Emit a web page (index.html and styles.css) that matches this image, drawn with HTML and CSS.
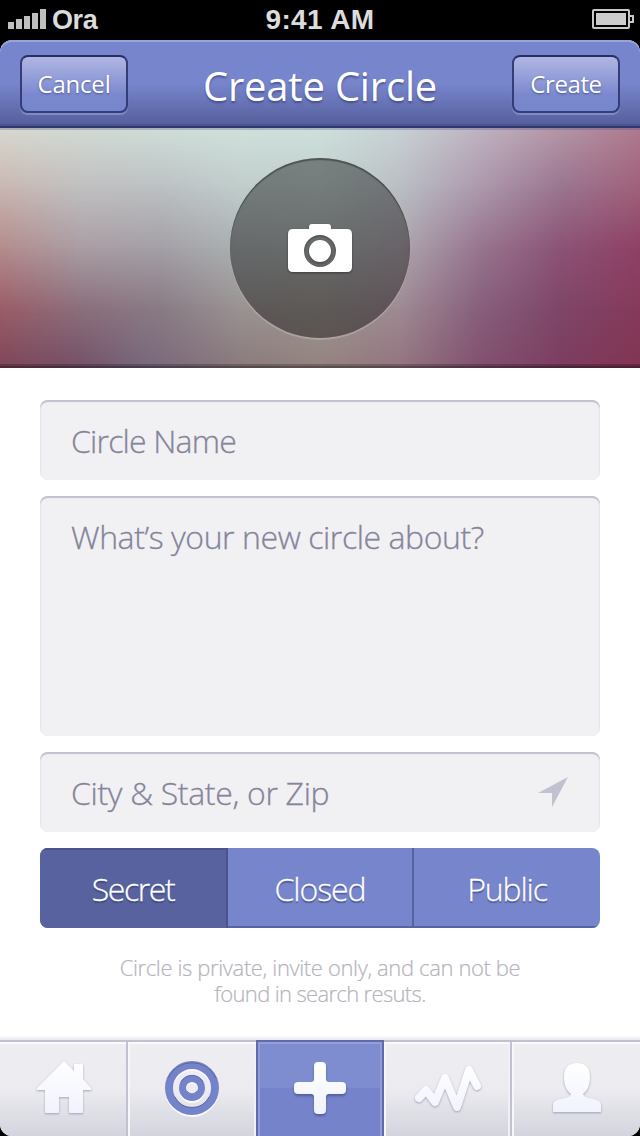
FILE: index.html
```html
<!DOCTYPE html>
<html lang="en">
<head>
<meta charset="utf-8">
<title>Create Circle</title>
<link rel="stylesheet" href="styles.css">
</head>
<body>
<div class="phone">
  <header class="status">
    <div class="carrier">
      <svg width="38" height="20" viewBox="0 0 38 20" fill="#bfbfbf"><path d="M0 13h6v7H0zM8 10h6v10H8zM16 7h6v13h-6zM24 4h6v16h-6zM32 0h6v20h-6z"/></svg>
      <span class="carrier-name">Ora</span>
    </div>
    <span class="clock">9:41 AM</span>
    <svg class="battery" width="42" height="20" viewBox="0 0 42 20"><rect x="1" y="1" width="36" height="18" rx="1" fill="none" stroke="#c8c8c8" stroke-width="2"/><path d="M4 4h30v12H4z" fill="#ccc"/><path d="M38 7h3v6h-3" fill="none" stroke="#c8c8c8" stroke-width="2"/></svg>
  </header>

  <div class="screen">
    <nav class="navbar">
      <button class="nav-button"><span class="cancel-label">Cancel</span></button>
      <h1 class="title">Create Circle</h1>
      <button class="nav-button"><span class="create-label">Create</span></button>
    </nav>

    <section class="cover">
      <div class="wash wash-1"></div>
      <div class="wash wash-2"></div>
      <div class="wash wash-3"></div>
      <div class="wash wash-4"></div>
      <div class="wash edge"></div>
      <button class="photo" aria-label="Add photo">
        <svg class="camera" width="64" height="48" viewBox="0 0 64 48"><path fill="#fff" fill-rule="evenodd" d="M5 5H21V3Q21 0 24 0H40Q43 0 43 3V5H59Q64 5 64 10V43Q64 48 59 48H5Q0 48 0 43V10Q0 5 5 5ZM32 11A16 16 0 1 0 32 43A16 16 0 1 0 32 11Z"/><circle cx="32" cy="27" r="11" fill="#fff"/></svg>
      </button>
    </section>

    <main class="form">
      <div class="field"><span class="name-hint">Circle Name</span></div>
      <div class="field about"><span class="about-hint">What’s your new circle about?</span></div>
      <div class="field"><span class="place-hint">City &amp; State, or Zip</span>
        <svg class="locate" width="30" height="30" viewBox="0 0 30 30"><path d="M30 0L14 30V16H0Z" fill="#c2c1d0"/></svg>
      </div>
      <div class="segments">
        <button class="segment selected"><span class="secret-label">Secret</span></button>
        <button class="segment"><span class="closed-label">Closed</span></button>
        <button class="segment"><span class="public-label">Public</span></button>
      </div>
      <p class="note"><span class="note-top">Circle is private, invite only, and can not be</span><br><span class="note-bottom">found in search resuts.</span></p>
    </main>

    <footer class="tabs">
      <div class="tab first">
        <svg class="raised home" width="56" height="54" viewBox="0 0 56 54"><path fill="url(#pale)" d="M28 0L38 10V4Q38 3 39 3H46Q47 3 47 4V18L55 27Q56 29 54 29H47V51Q47 52 46 52H34Q33 52 33 51V36H23V51Q23 52 22 52H10Q9 52 9 51V29H2Q0 29 1 27Z"/>
          <defs><linearGradient id="pale" x1="0" y1="0" x2="0" y2="1"><stop offset="0" stop-color="#fff"/><stop offset="1" stop-color="#f0f3fd"/></linearGradient></defs></svg>
      </div>
      <div class="tab">
        <svg class="target" width="54" height="54" viewBox="0 0 54 54" fill="none" stroke="#7583cb"><circle cx="27" cy="27" r="23" stroke-width="8"/><circle cx="27" cy="27" r="9.5" stroke-width="7"/><g stroke="#4f5989" stroke-opacity=".65" stroke-width="1"><path d="M3 17A26.500 26.500 0 0 1 51 17M10 36A19 19 0 0 0 44 36M16 21A12.500 12.500 0 0 1 38 21M22 30A6 6 0 0 0 32 30"/></g></svg>
      </div>
      <div class="tab add">
        <svg class="plus" width="52" height="52" viewBox="0 0 52 52"><path fill="url(#pale)" d="M24 0h4q4 0 4 4v13q0 3 3 3h13q4 0 4 4v4q0 4-4 4H35q-3 0-3 3v13q0 4-4 4h-4q-4 0-4-4V35q0-3-3-3H4q-4 0-4-4v-4q0-4 4-4h13q3 0 3-3V4q0-4 4-4Z"/></svg>
      </div>
      <div class="tab">
        <svg class="raised activity" width="68" height="48" viewBox="0 0 68 48"><path d="M5 33L12 25L21 37L31 13L43 42L55 5L63 21" fill="none" stroke="url(#line)" stroke-width="8" stroke-linecap="round" stroke-linejoin="round"/><defs><linearGradient id="line" gradientUnits="userSpaceOnUse" x1="0" y1="0" x2="0" y2="48"><stop offset="0" stop-color="#fff"/><stop offset="1" stop-color="#f0f3fd"/></linearGradient></defs></svg>
      </div>
      <div class="tab last">
        <svg class="raised person" width="50" height="50" viewBox="0 0 50 50"><path fill="url(#pale)" d="M25 0C34 0 38 5 38 14C38 23 35 28 31 31C32 34 35 34.500 39 35.500C46 37 49 38 49 42V49H1V42C1 38 4 37 11 35.500C15 34.500 18 34 19 31C15 28 12 23 12 14C12 5 16 0 25 0Z"/></svg>
      </div>
    </footer>
  </div>
</div>
</body>
</html>
```

FILE: styles.css
```css
* { box-sizing: border-box; }

body {
  margin: 0;
  background: #000;
  font-family: "Open Sans", "Noto Sans", sans-serif;
}

button {
  margin: 0;
  padding: 0;
  border: 0;
  background: none;
  font: inherit;
  color: inherit;
}

svg { display: block; overflow: visible; }

span { white-space: nowrap; }

.phone {
  display: flex;
  flex-direction: column;
  width: 640px;
  height: 1136px;
  background: #000;
}

.status {
  display: grid;
  grid-template-columns: 1fr auto 1fr;
  align-items: center;
  height: 40px;
  padding: 0 6px 2px 8px;
  font: bold 28px/32px "Liberation Sans", Arial, sans-serif;
  color: #dcdcdc;
}

.carrier { display: flex; align-items: center; gap: 6px; }
.carrier-name { padding-top: 2px; font-size: 27px; letter-spacing: -.4px; }
.clock { padding: 2px 2px 0 0; letter-spacing: .4px; }
.battery { justify-self: end; }

.screen {
  display: flex;
  flex-direction: column;
  height: 1096px;
  border-radius: 12px;
  overflow: hidden;
  background: #fff;
}

.navbar {
  display: flex;
  justify-content: space-between;
  align-items: center;
  height: 88px;
  padding: 2px 20px 0;
  background: linear-gradient(#7785cc 0, #7785cc 50%, #6c79bd 66%, #545e9b 100%);
  border-bottom: 2px solid #303870;
  border-radius: 12px 12px 0 0;
  box-shadow: inset 0 2px #99a4dc, inset 0 -2px #4b548f;
  color: #fff;
}

.title {
  margin: 0;
  padding-top: 3px;
  font-size: 40px;
  font-weight: 400;
  letter-spacing: -.2px;
  line-height: 56px;
  text-shadow: 0 2px 2px rgba(45, 53, 108, .55);
}

.nav-button {
  width: 108px;
  height: 58px;
  border: 2px solid #343d78;
  border-top-color: #262e66;
  border-radius: 8px;
  background: linear-gradient(#b0b6e3, #8e99d6 45%, #7a88ce 70%, #7785cc);
  box-shadow: 0 2px 1px rgba(145, 155, 210, .7);
  font-size: 24px;
  letter-spacing: -.2px;
  line-height: 50px;
  text-shadow: 0 1px 2px rgba(45, 53, 108, .6);
}
.create-label { letter-spacing: -.4px; }

.cover {
  position: relative;
  display: flex;
  justify-content: center;
  height: 240px;
  padding-top: 30px;
  background: linear-gradient(90deg, #d8d9d0, #d2dad3 12.5%, #cfded9 25%, #d0e1dc 37.5%, #cee0dc 50%, #c8d1d4 62.5%, #bfb3c1 75%, #b496a6 87.5%, #ae7a90);
}

.wash { position: absolute; inset: 0; }
.wash-1 {
  background: linear-gradient(90deg, #c9b6b1, #c0bfc0 12.5%, #bcc0c2 25%, #c0cccb 37.5%, #c0cfcc 50%, #b9bec4 62.5%, #ac98ac 75%, #9a7590 87.5%, #a0607a);
  mask-image: linear-gradient(transparent, #000 25%);
}
.wash-2 {
  background: linear-gradient(90deg, #b48c8c, #aa9da4 12.5%, #a49fa6 25%, #aab0b2 37.5%, #aeb2b2 50%, #ada5ae 62.5%, #97758f 75%, #8c5376 87.5%, #8e4165);
  mask-image: linear-gradient(transparent 25%, #000 50%);
}
.wash-3 {
  background: linear-gradient(90deg, #9a5d68, #8b6f7c 12.5%, #897b85 25%, #9a9392 37.5%, #9c9590 50%, #9e8a93 62.5%, #875f7c 75%, #7e4668 87.5%, #863a5b);
  mask-image: linear-gradient(transparent 50%, #000 75%);
}
.wash-4 {
  background: linear-gradient(90deg, #7e4658, #745068 12.5%, #77667b 22%, #8a797c 37.5%, #94837e 50%, #93747f 62.5%, #82506f 75%, #7c3d61 87.5%, #823452);
  mask-image: linear-gradient(transparent 75%, #000);
}
.edge {
  box-shadow: inset 0 2px rgba(80, 80, 120, .3), inset 0 -2px rgba(0, 0, 0, .22), inset 0 -4px rgba(0, 0, 0, .22);
}

.photo {
  position: relative;
  display: grid;
  justify-items: center;
  align-content: start;
  width: 180px;
  height: 180px;
  padding-top: 66px;
  border-radius: 50%;
  background: linear-gradient(rgba(0, 0, 0, .4), rgba(0, 0, 0, .4));
  box-shadow: inset 0 2px 1px rgba(0, 0, 0, .35), 0 2px rgba(255, 255, 255, .2);
}

.camera { filter: drop-shadow(0 1px 1px rgba(0, 0, 0, .4)); }

.form {
  flex: 1;
  display: flex;
  flex-direction: column;
  gap: 16px;
  padding: 32px 40px 0;
}

.field {
  display: flex;
  justify-content: space-between;
  align-items: flex-start;
  height: 80px;
  padding: 19px 32px 0 31px;
  border-radius: 8px;
  background: #f1f1f4;
  box-shadow: inset 0 2px 1px #c2c1d0, inset 0 1px 2px #d5d5df;
  font-size: 32px;
  font-weight: 300;
  line-height: 44px;
  color: #85849a;
  -webkit-text-stroke: .3px #85849a;
}
.about { height: 240px; }
.name-hint { letter-spacing: -.8px; }
.about-hint { letter-spacing: -.42px; }
.place-hint { letter-spacing: -.32px; }
.locate { margin-top: 6px; }

.segments {
  display: grid;
  grid-template-columns: 188px 186px 186px;
  height: 80px;
  border-radius: 8px;
  overflow: hidden;
  background: #7785cc;
  color: #fff;
}

.segment {
  padding-top: 2px;
  border-right: 2px solid #5662a1;
  box-shadow: inset 0 -2px #5662a1;
  font-size: 32px;
  font-weight: 300;
  line-height: 44px;
  text-shadow: 0 2px 1px rgba(50, 58, 115, .6);
  -webkit-text-stroke: .3px #fff;
}
.segment:last-child { border-right: 0; }
.selected {
  background: #57629f;
  border-color: #4a548b;
  box-shadow: inset 0 2px #4a548b;
}
.secret-label { letter-spacing: -1.4px; }
.closed-label { letter-spacing: -1.1px; }
.public-label { letter-spacing: -1.1px; }

.note {
  margin: 10px 0 0;
  font-size: 22px;
  font-weight: 300;
  line-height: 26px;
  text-align: center;
  color: #b5b4be;
  -webkit-text-stroke: .2px #b5b4be;
}
.note-top { letter-spacing: -.37px; }
.note-bottom { letter-spacing: -.65px; }

.tabs {
  display: grid;
  grid-template-columns: 128px 128px 128px 128px 128px;
  height: 96px;
  box-shadow: 0 -2px #ececf1, 0 -4px #f8f8fa;
}

.tab {
  display: grid;
  justify-items: center;
  align-content: start;
  padding-top: 19px;
  border-top: 2px solid #c2c1d0;
  border-right: 2px solid #c2c1d0;
  background: linear-gradient(#eeeef2, #ebebf0 50%, #d3d4dd);
  box-shadow: inset 0 2px #fafafc, inset 2px 0 #f7f7fa, inset -2px 0 #f1f1f5;
}

.tab:nth-child(2), .last { border-right: 0; }
.first { box-shadow: inset 0 2px #fafafc; }
.last { box-shadow: inset 0 2px #fafafc, inset 2px 0 #f7f7fa; }

.add {
  padding-top: 20px;
  border: 2px solid #5f6bad;
  border-bottom: 0;
  background: linear-gradient(#7e8dcf 0, #7e8dcf 46px, #7583cb 46px);
  box-shadow: inset 0 2px #95a0d8, inset 2px 0 #929dd7, inset -2px 0 #929dd7;
}

.raised { filter: drop-shadow(0 1px 1px rgba(100, 100, 130, .5)); }
.target { filter: drop-shadow(0 2px 0 #fafafc); }
.plus { filter: drop-shadow(0 2px 1px rgba(60, 70, 130, .6)); }
.home { margin-left: 2px; }
.activity { margin: 4px 0 0 2px; }
.person { margin: 2px 0 0 2px; }
```
